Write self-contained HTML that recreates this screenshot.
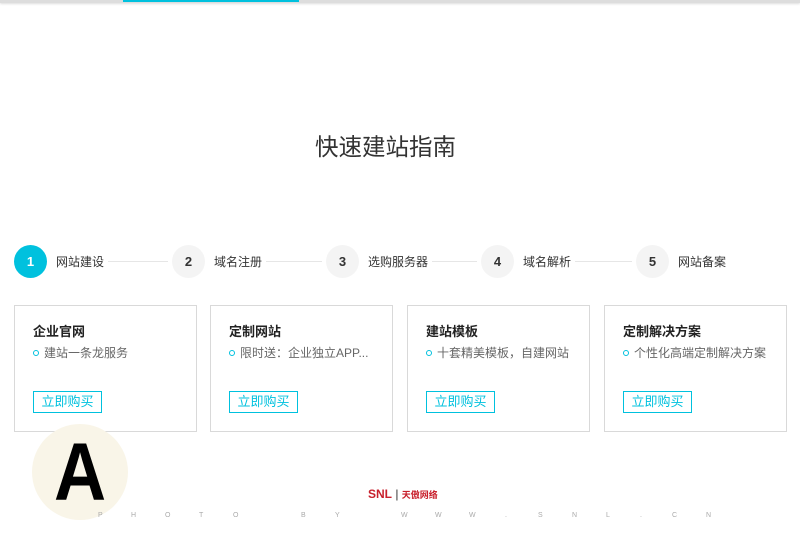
<!DOCTYPE html>
<html><head><meta charset="utf-8"><style>
*{margin:0;padding:0;box-sizing:border-box}
body{width:800px;height:533px;background:#fff;position:relative;overflow:hidden;font-family:"Liberation Sans","Noto Sans CJK SC",sans-serif;color:#333}
.top{position:absolute;left:0;top:0;width:800px;height:3px;background:#ddd;box-shadow:0 1px 2px #ddd}
.bar{position:absolute;left:123px;top:0;width:176px;height:2px;background:#00c1de}
h1{position:absolute;top:128px;left:315px;font-weight:normal;font-size:23.5px;color:#333;white-space:nowrap}
.c{position:absolute;top:245px;width:33px;height:33px;border-radius:50%;background:#f4f4f4;text-align:center;line-height:33px;font-size:13px;font-weight:bold;color:#333}
.c.on{background:#00c1de;color:#fff}
.l{position:absolute;top:253px;font-size:12px;color:#333}
.ln{position:absolute;top:261px;height:1px;background:#e6e6e6}
.card{position:absolute;top:305px;width:183px;height:127px;border:1px solid #d9d9d9}
.card b{position:absolute;left:18px;top:15px;font-size:13px;color:#222}
.card p{position:absolute;left:18px;top:38px;font-size:12px;color:#666;white-space:nowrap}
.card p i{display:inline-block;width:6px;height:6px;border:1px solid #00c1de;border-radius:50%;margin-right:5px;vertical-align:1px}
.card a{position:absolute;left:18px;top:85px;width:69px;height:22px;border:1px solid #00c1de;color:#00c1de;font-size:13px;text-align:center;line-height:20px}
.A{position:absolute;left:32px;top:424px;width:96px;height:96px;border-radius:50%;background:#f9f5e8}
.A span{position:absolute;left:0;width:96px;top:4px;text-align:center;font-size:82px;line-height:90px;color:#000;font-family:"Liberation Sans",sans-serif;font-weight:bold;transform:scaleX(0.88)}
.logo{position:absolute;left:368px;top:487px;font-size:12px;font-weight:bold;color:#c8202c}
.ph{position:absolute;left:98px;top:512px;font-size:7px;color:#aaa}
.ph span{position:absolute}
</style></head><body>
<div class="top"></div><div class="bar"></div>
<h1>快速建站指南</h1>
<div class="c on" style="left:14px">1</div><div class="l" style="left:56px">网站建设</div><div class="ln" style="left:108px;width:60px"></div>
<div class="c" style="left:172px">2</div><div class="l" style="left:214px">域名注册</div><div class="ln" style="left:266px;width:56px"></div>
<div class="c" style="left:326px">3</div><div class="l" style="left:368px">选购服务器</div><div class="ln" style="left:432px;width:45px"></div>
<div class="c" style="left:481px">4</div><div class="l" style="left:523px">域名解析</div><div class="ln" style="left:575px;width:57px"></div>
<div class="c" style="left:636px">5</div><div class="l" style="left:678px">网站备案</div>
<div class="card" style="left:14px"><b>企业官网</b><p><i></i>建站一条龙服务</p><a>立即购买</a></div>
<div class="card" style="left:210px"><b>定制网站</b><p><i></i>限时送：企业独立APP...</p><a>立即购买</a></div>
<div class="card" style="left:407px"><b>建站模板</b><p><i></i>十套精美模板，自建网站</p><a>立即购买</a></div>
<div class="card" style="left:604px"><b>定制解决方案</b><p><i></i>个性化高端定制解决方案</p><a>立即购买</a></div>
<div class="A"><span>A</span></div>
<div class="logo">SNL<span style="font-weight:normal;color:#333"> | </span><span style="font-size:9px">天傲网络</span></div>
<div class="ph">
<span style="left:0">P</span><span style="left:33px">H</span><span style="left:67px">O</span><span style="left:101px">T</span><span style="left:135px">O</span><span style="left:203px">B</span><span style="left:237px">Y</span><span style="left:303px">W</span><span style="left:337px">W</span><span style="left:371px">W</span><span style="left:407px">.</span><span style="left:440px">S</span><span style="left:474px">N</span><span style="left:508px">L</span><span style="left:542px">.</span><span style="left:574px">C</span><span style="left:608px">N</span>
</div>
</body></html>
